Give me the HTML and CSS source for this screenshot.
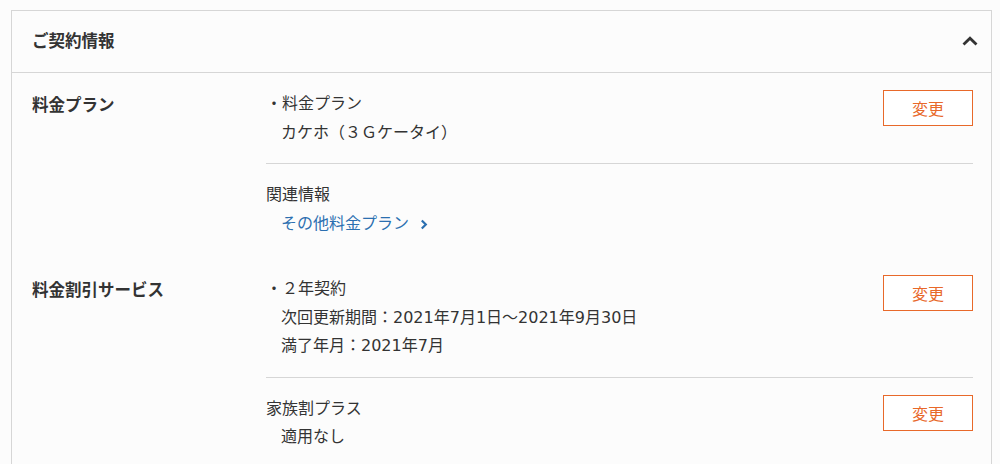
FILE: index.html
```html
<!DOCTYPE html>
<html lang="ja">
<head>
<meta charset="utf-8">
<title>ご契約情報</title>
<link rel="stylesheet" href="styles.css">
</head>
<body>
<section class="card">
  <header class="card-head">
    <h2 class="card-title">ご契約情報</h2>
    <svg class="chev-up" width="16" height="10" viewBox="0 0 16 10"><path d="M1.5 8.5 L8 2.2 L14.5 8.5" fill="none" stroke="#333" stroke-width="2.8"/></svg>
  </header>

  <div class="row">
    <div class="label">料金プラン</div>
    <div class="content">
      <div class="block">
        <div class="text">
          <p class="item">・料金プラン</p>
          <p class="sub">カケホ（３Ｇケータイ）</p>
        </div>
        <button class="btn">変更</button>
      </div>
      <div class="block">
        <div class="text">
          <p class="item">関連情報</p>
          <p class="sub"><a class="link" href="#">その他料金プラン<svg class="chev-r" width="8" height="11" viewBox="0 0 8 11"><path d="M1.8 1.5 L5.8 5.5 L1.8 9.5" fill="none" stroke="#2b6fb0" stroke-width="2.2"/></svg></a></p>
        </div>
      </div>
    </div>
  </div>

  <div class="row">
    <div class="label">料金割引サービス</div>
    <div class="content">
      <div class="block">
        <div class="text">
          <p class="item">・２年契約</p>
          <p class="sub">次回更新期間：2021年7月1日～2021年9月30日</p>
          <p class="sub">満了年月：2021年7月</p>
        </div>
        <button class="btn">変更</button>
      </div>
      <div class="block">
        <div class="text">
          <p class="item">家族割プラス</p>
          <p class="sub">適用なし</p>
        </div>
        <button class="btn">変更</button>
      </div>
    </div>
  </div>
</section>
</body>
</html>
```
FILE: styles.css
```css
html, body {
  margin: 0;
  padding: 0;
  background: #fcfcfc;
}
body {
  padding: 10px 8px 0 11px;
  font-family: "DejaVu Sans", "Noto Sans CJK JP", sans-serif;
  color: #333;
}
.card {
  border: 1px solid #d6d6d6;
  border-bottom: none;
  background: #fcfcfc;
}
.card-head {
  height: 62px;
  box-sizing: border-box;
  border-bottom: 1px solid #d6d6d6;
  display: flex;
  align-items: center;
  justify-content: space-between;
  padding: 0 13px 3px 20px;
}
.card-title {
  margin: 0;
  font-family: "Noto Sans CJK JP", sans-serif;
  font-size: 16.5px;
  font-weight: 700;
  line-height: 1;
}
.chev-up { display: block; margin-top: 1px; }
.row {
  display: flex;
  padding: 17px 18px 20px 20px;
}
.label {
  width: 234px;
  flex: none;
  font-family: "Noto Sans CJK JP", sans-serif;
  font-size: 16.5px;
  font-weight: 700;
  line-height: 28px;
}
.content {
  flex: 1;
}
.block {
  display: flex;
  justify-content: space-between;
  align-items: flex-start;
  padding: 0 0 16px;
}
.block + .block {
  border-top: 1px solid #d6d6d6;
  padding: 17px 0 0;
}
.text p {
  margin: 0;
  font-size: 16px;
  line-height: 28.5px;
}
.sub { padding-left: 15px; }
.link {
  color: #2b6fb0;
  text-decoration: none;
  display: inline-flex;
  align-items: center;
  gap: 11px;
}
.chev-r { display: block; margin-top: 1px; }
.btn {
  margin-top: 0;
  width: 90px;
  height: 36px;
  border: 1px solid #e8692a;
  background: #fff;
  color: #e8692a;
  font-family: "Noto Sans CJK JP", sans-serif;
  font-size: 16px;
  padding: 0;
  cursor: pointer;
}
```
